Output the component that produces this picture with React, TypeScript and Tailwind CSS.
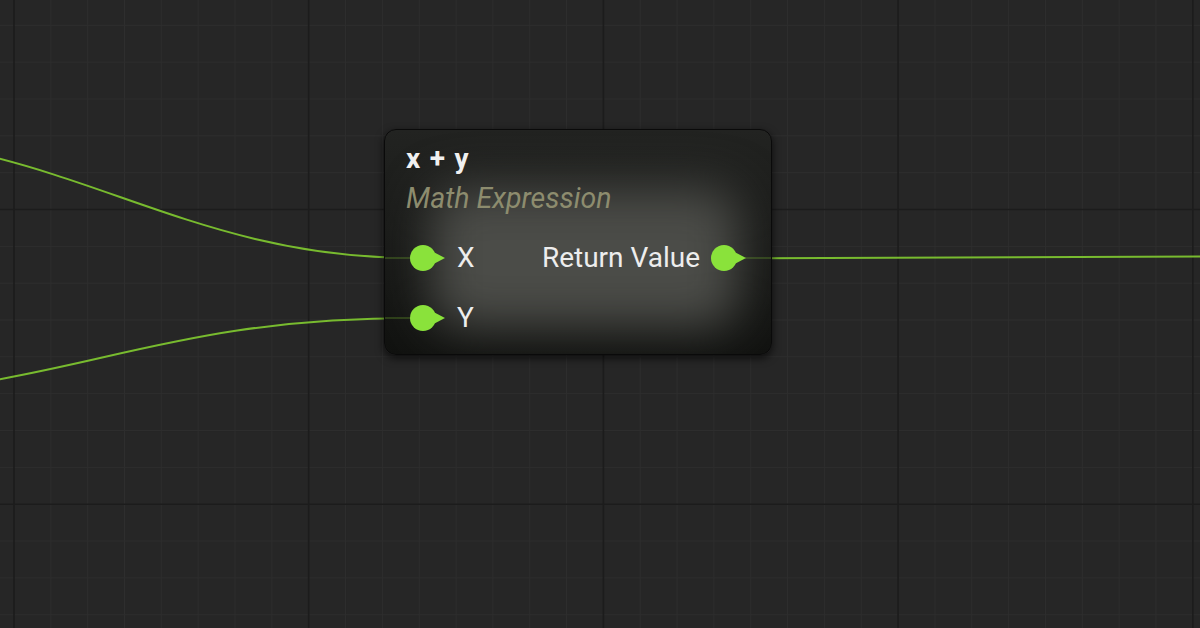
import React from "react";

const W = 1200;
const H = 628;
const MAJOR = 294.7;
const STEP = MAJOR / 8;
const WIRE = "#78bb2f";
const PIN = "#8ae23b";

function mod8(i: number) {
  return ((i % 8) + 8) % 8;
}

// canvas background: minor / major grid lines and the wires between pins
function Canvas() {
  const minor: React.ReactNode[] = [];
  const major: React.ReactNode[] = [];
  for (let i = -1; i < 36; i++) {
    const x = 14 + i * STEP;
    if (x < -2 || x > W + 2) continue;
    const el = <line key={"v" + i} x1={x} y1={0} x2={x} y2={H} />;
    (mod8(i) === 0 ? major : minor).push(el);
  }
  for (let i = -7; i < 13; i++) {
    const y = 209.5 + i * STEP;
    if (y < -2 || y > H + 2) continue;
    const el = <line key={"h" + i} x1={0} y1={y} x2={W} y2={y} />;
    (mod8(i) === 0 ? major : minor).push(el);
  }

  return (
    <svg className="absolute inset-0" width={W} height={H} viewBox={`0 0 ${W} ${H}`}>
      <g stroke="#2e2e2e" strokeWidth={1}>{minor}</g>
      <g stroke="#1c1c1c" strokeWidth={1.6}>{major}</g>
      <g fill="none" stroke={WIRE} strokeWidth={2} strokeLinecap="round">
        <path d="M -175 136 C 66 136, 174 258, 415 258" />
        <path d="M -215 398 C 67 398, 133 318, 415 318" />
        <path d="M 745 258.4 L 1200 256.6" />
      </g>
    </svg>
  );
}

function Pin({ side }: { side: "in" | "out" }) {
  return (
    <svg width="36" height="28" viewBox="0 0 36 28" className="shrink-0 overflow-visible">
      {side === "in" ? (
        <line x1={-26} y1={14} x2={4} y2={14} stroke={WIRE} strokeOpacity={0.35} strokeWidth={1.5} />
      ) : (
        <line x1={34} y1={14} x2={61} y2={14} stroke={WIRE} strokeOpacity={0.35} strokeWidth={1.5} />
      )}
      <circle cx="13" cy="14" r="13" fill={PIN} />
      <path d="M24.5 8.5 L35 14 L24.5 19.5 Z" fill={PIN} />
    </svg>
  );
}

function MathNode() {
  return (
    <div className="absolute left-[384px] top-[129px] w-[388px] h-[226px] rounded-[12px] border border-[#0a0a0a] bg-gradient-to-b from-[#222321] to-[#111210] shadow-[0_3px_8px_rgba(0,0,0,0.7)] overflow-hidden">
      {/* soft lit centre of the node body */}
      <div className="absolute left-[46px] top-[58px] right-[32px] bottom-[26px] rounded-[30px] bg-[#4b4c48] blur-[24px]" />

      <div className="relative flex flex-col pl-[21px] pr-[24px] pt-[13px] font-['Roboto',sans-serif]">
        <div className="text-[28px] leading-[32px] font-bold text-[#f0f0f0] [word-spacing:2.5px]">x + y</div>
        <div className="mt-[8px] text-[28.5px] leading-[32px] italic text-[#8d8c6e]">Math Expression</div>

        <div className="mt-[27px] flex flex-col gap-[28px]">
          <div className="flex h-[32px] items-center justify-between">
            <div className="flex items-center gap-[11px] pl-[4px]">
              <Pin side="in" />
              <span className="text-[28px] leading-[32px] text-[#ededed]">X</span>
            </div>
            <div className="flex items-center gap-[11px]">
              <span className="text-[28px] leading-[32px] text-[#ededed]">Return Value</span>
              <Pin side="out" />
            </div>
          </div>
          <div className="flex h-[32px] items-center gap-[11px] pl-[4px]">
            <Pin side="in" />
            <span className="text-[28px] leading-[32px] text-[#ededed]">Y</span>
          </div>
        </div>
      </div>
    </div>
  );
}

export default function App() {
  return (
    <div className="relative w-[1200px] h-[628px] overflow-hidden bg-[#262626]">
      <Canvas />
      <MathNode />
    </div>
  );
}
